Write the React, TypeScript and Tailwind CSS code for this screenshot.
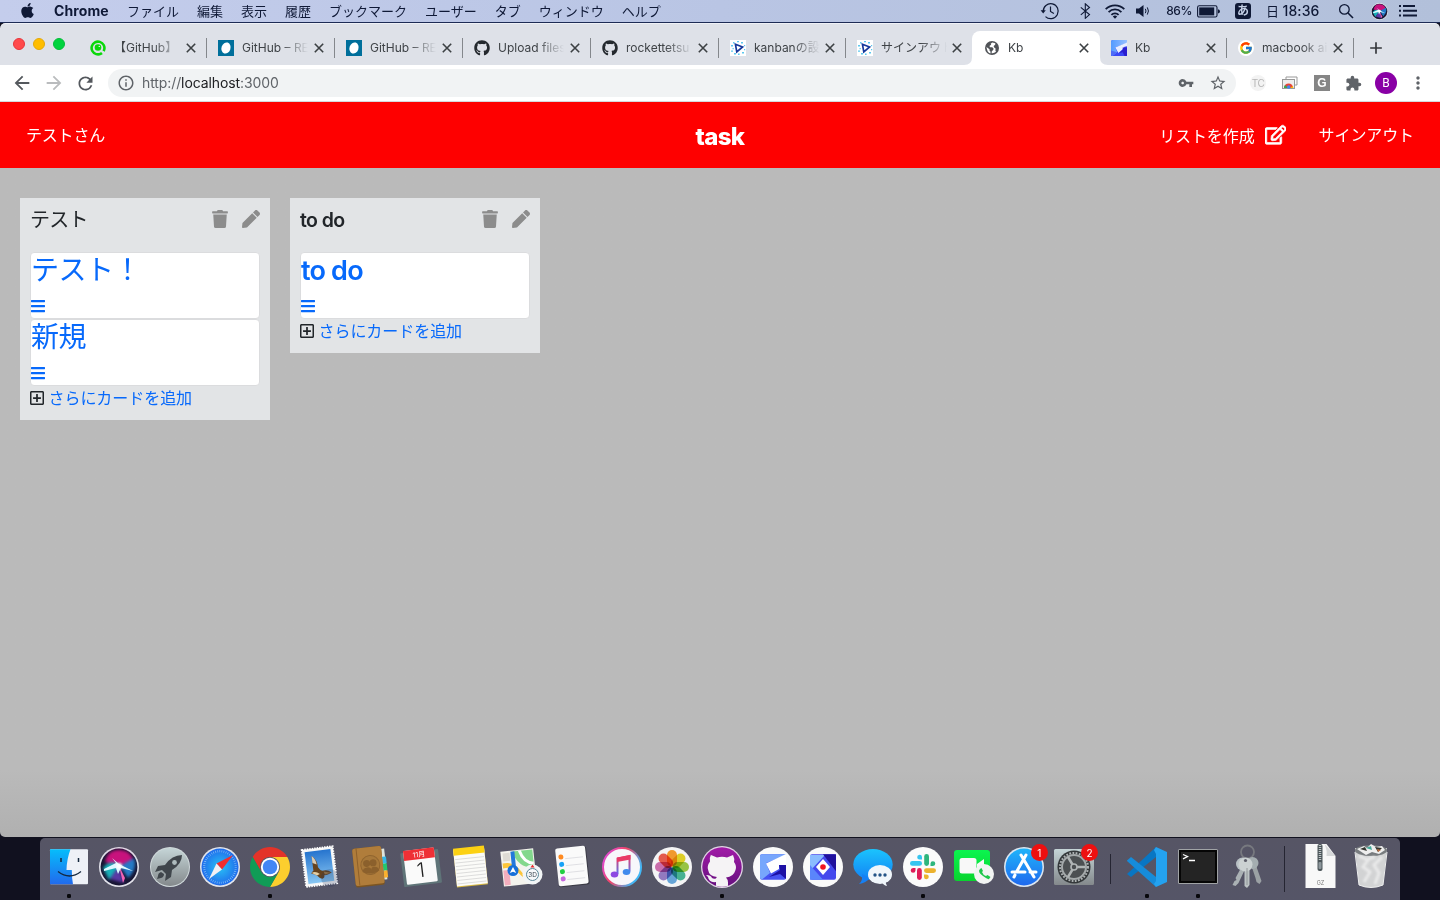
import React from "react";
import { FaApple, FaBars, FaGithub, FaPen, FaRegEdit, FaRegPlusSquare, FaTrash } from "react-icons/fa";
import { FcGoogle } from "react-icons/fc";
import {
  MdAdd,
  MdArrowBack,
  MdArrowForward,
  MdExtension,
  MdMoreVert,
  MdOutlineInfo,
  MdRefresh,
  MdStarBorder,
  MdVpnKey,
} from "react-icons/md";

/* ---------- Menu bar ---------- */

const menus = ["ファイル", "編集", "表示", "履歴", "ブックマーク", "ユーザー", "タブ", "ウィンドウ", "ヘルプ"];

function MenuBar() {
  return (
    <div className="flex h-[23px] shrink-0 items-center border-b border-[#1d2b55] bg-linear-to-r from-[#c4cdec] via-[#b9c5e4] to-[#b2c0da] text-[13px] leading-[22px] text-[#0f1936]">
      <div className="flex w-[54px] justify-center">
        <FaApple size={17} className="-mt-0.5" />
      </div>
      <div className="w-[73px] text-[14px] font-bold tracking-[0.1px]">Chrome</div>
      <div className="flex gap-[18px]">
        {menus.map((m) => (
          <span key={m} className="whitespace-nowrap">{m}</span>
        ))}
      </div>
      <div className="ml-auto flex items-center">
        <div className="flex w-[36px] justify-center">
          <svg width="20" height="18" viewBox="0 0 20 18" fill="none" stroke="currentColor" strokeWidth="1.2">
            <path d="M3.2 9.5A7.5 7.5 0 1 1 5.5 14.6" />
            <path d="M10.5 4.5v5l3.4 2" />
            <path d="M.6 8.2h5.2L3.2 11.4z" fill="currentColor" stroke="none" />
          </svg>
        </div>
        <div className="flex w-[34px] justify-center">
          <svg width="11" height="16" viewBox="0 0 11 16" fill="none" stroke="currentColor" strokeWidth="1.1">
            <path d="m.8 4.3 8.7 7.3-4.2 3.7V.8l4.2 3.7-8.7 7.3" />
          </svg>
        </div>
        <div className="flex w-[26px] justify-center">
          <svg width="20" height="15" viewBox="0 0 20 15" fill="none" stroke="currentColor" strokeWidth="1.8">
            <path d="M.7 5.2a13.2 13.2 0 0 1 18.6 0M3.6 8.1a9.1 9.1 0 0 1 12.8 0M6.4 10.8a5.1 5.1 0 0 1 7.2 0" />
            <path d="M10 14.8 7.8 12.5a3.2 3.2 0 0 1 4.4 0z" fill="currentColor" stroke="none" />
          </svg>
        </div>
        <div className="flex w-[29px] justify-center">
          <svg width="15" height="14" viewBox="0 0 15 14" fill="currentColor">
            <path d="M1 4.5h3L8.5 1v12L4 9.5H1z" />
            <path d="M10.3 4.8q1.4 2.2 0 4.4M12.3 3.4q2.3 3.6 0 7.2" fill="none" stroke="currentColor" strokeWidth="1" />
          </svg>
        </div>
        <div className="w-[40px] pr-[5px] text-right text-[12px] font-medium tracking-[-0.4px]">86%</div>
        <div className="flex w-[38px] items-center">
          <svg width="24" height="13" viewBox="0 0 24 13">
            <rect x=".6" y=".8" width="19.4" height="11.2" rx="1.6" fill="none" stroke="currentColor" strokeWidth="1.1" />
            <rect x="2.2" y="2.4" width="15" height="8" fill="currentColor" />
            <path d="M21 4.2q2 .6 2 2.2t-2 2.2z" fill="currentColor" />
          </svg>
        </div>
        <div className="flex h-4 w-4 items-center justify-center rounded-[3px] bg-[#0f1936] text-[12px] font-bold leading-4 text-[#c3cfe6]">あ</div>
        <div className="flex w-[76px] gap-[3.5px] whitespace-nowrap pl-[15px] text-[14px]">
          <span className="text-[13px]">日</span>
          <span className="font-medium tracking-[0.1px]">18:36</span>
        </div>
        <div className="flex w-[38px] justify-center">
          <svg width="16" height="16" viewBox="0 0 16 16" fill="none" stroke="currentColor" strokeWidth="1.3">
            <circle cx="6.4" cy="6.4" r="4.8" />
            <path d="m10 10 5 5" strokeWidth="1.6" />
          </svg>
        </div>
        <div className="flex w-[28px] justify-center">
          <svg width="17" height="17" viewBox="5 9 40 40"><SiriArt /></svg>
        </div>
        <div className="flex w-[47px] pl-[6px]">
          <svg width="18" height="12" viewBox="0 0 18 12" fill="currentColor">
            <path d="M0 0h2v2H0zM4 0h12v2H4zM0 4.7h2v2H0zM4 4.7h14v2H4zM0 9.4h2v2H0zM4 9.4h14v2H4z" />
          </svg>
        </div>
      </div>
    </div>
  );
}

/* ---------- Browser tabs ---------- */

function QiitaIcon() {
  return (
    <svg width="16" height="16" viewBox="0 0 16 16">
      <circle cx="8" cy="8" r="6.4" fill="none" stroke="#0bd80b" strokeWidth="2.6" strokeDasharray="35.5 2.5 2.2 0" transform="rotate(62 8 8)" />
      <circle cx="8" cy="7.5" r="3.3" fill="#0bd80b" />
      <circle cx="9.3" cy="6.4" r=".7" fill="#e8ffe8" />
    </svg>
  );
}

function EggIcon() {
  return (
    <svg width="16" height="16" viewBox="0 0 16 16">
      <path fill="#006f9b" d="M0 0h16v16H0z" />
      <ellipse cx="8" cy="8" rx="4.5" ry="5.7" fill="#fff" transform="rotate(18 8 8)" />
    </svg>
  );
}

function PlayIcon() {
  return (
    <svg width="16" height="16" viewBox="0 0 16 16">
      <path fill="#fff" d="M0 0h16v16H0z" />
      <path d="M5.4 4.2 12.6 7 6.8 12z" fill="none" stroke="#173a9c" strokeWidth="1.7" />
      <path
        fill="#5cc8f0"
        d="M3 2h1.500v1.500H3zM7 1h2v1.200H7zM11 2h2v1.500h-2zM1 5h2v1.500H1zM2.500 8h1.300v1.300H2.500zM1 10.500h2v1.200H1zM4 13h2v1.500H4zM8 13.500h1.600v1.500H8zM12 12h2v1.400h-2zM14 5h1.200v1.200H14zM14 9h1.200v1.200H14z"
      />
    </svg>
  );
}

function GlobeIcon() {
  return (
    <svg width="14" height="14" viewBox="0 0 14 14">
      <circle cx="7" cy="7" r="7" fill="#505357" />
      <path d="M7.2 1.4 5.7 2.7l.5 1.1-1.6 1 .2 1.5h2.5l1.3 1.5-.6 1.8-1.1.2-.3 2.4A5.7 5.7 0 0 0 11 10.8l-.6-1.2.2-2.1-1.4-1-.6-1.5 1.6-1.2.1-1.5z" fill="#fff" />
      <path d="m1.500 6 3 2.200.1 1.600 1 .9-.2 1.800Q2 11.500 1.500 6" fill="#fff" />
    </svg>
  );
}

function GIcon() {
  return (
    <svg width="16" height="16" viewBox="0 0 26 26">
      <defs>
        <linearGradient id="gtop" x1="0" y1="0" x2="1" y2="0">
          <stop stopColor="#549bff" />
          <stop offset="1" stopColor="#95bfff" />
        </linearGradient>
      </defs>
      <rect width="26" height="26" rx="3" fill="#3a48f5" />
      <path d="M3 0h23v5L7 12l3 8-8 6q-2 0-2-3V3q0-3 3-3" fill="url(#gtop)" />
      <path d="M0 17 10 20 2 26H0z" fill="#4d6bf8" />
      <path d="M7 12 26 4v6l-4 1-3 4-7 6z" fill="#e8eeff" />
      <path d="M19 12h7v14h-4l-3-6-6 1 6-5z" fill="#2a1ed0" />
    </svg>
  );
}

function GoogleIcon() {
  return (
    <span className="flex h-4 w-4 items-center justify-center rounded-full bg-white"><FcGoogle size={14} /></span>
  );
}

function CloseIcon() {
  return (
    <svg width="14" height="14" viewBox="0 0 14 14" fill="none" stroke="#3c4043" strokeWidth="1.6">
      <path d="m2.800 2.800 8.400 8.400M11.200 2.800l-8.400 8.400" />
    </svg>
  );
}

type TabInfo = { icon: React.ReactNode; title: string; active?: boolean; line?: boolean; wide?: boolean };

const tabs: TabInfo[] = [
  { icon: <QiitaIcon />, title: "【GitHub】 ", line: true, wide: true },
  { icon: <EggIcon />, title: "GitHub – RE", line: true, wide: true },
  { icon: <EggIcon />, title: "GitHub – RE", line: true, wide: true },
  { icon: <FaGithub size={16} color="#24292e" />, title: "Upload files", line: true, wide: true },
  { icon: <FaGithub size={16} color="#24292e" />, title: "rockettetsu", line: true, wide: true },
  { icon: <PlayIcon />, title: "kanbanの設", line: true },
  { icon: <PlayIcon />, title: "サインアウト" },
  { icon: <GlobeIcon />, title: "Kb", active: true },
  { icon: <GIcon />, title: "Kb", line: true },
  { icon: <GoogleIcon />, title: "macbook ai", line: true },
];

function Tab({ icon, title, active, line, wide }: TabInfo) {
  const width = active ? "-ml-px w-[128px] rounded-t-[8px] bg-white pl-px" : wide ? "w-[128px]" : "w-[127px]";
  const fade = title === "Kb" ? "" : "[mask-image:linear-gradient(to_right,black_60%,transparent_100%)]";
  return (
    <div className={`relative flex h-[34px] shrink-0 items-center ${width}`}>
      {active && (
        <>
          <svg className="absolute bottom-0 -left-2" width="8" height="8"><path d="M8 0v8H0q8 0 8-8" fill="#fff" /></svg>
          <svg className="absolute bottom-0 -right-2" width="8" height="8"><path d="M0 0v8h8Q0 8 0 0" fill="#fff" /></svg>
        </>
      )}
      <div className="ml-[11px] flex h-4 w-4 items-center justify-center">{icon}</div>
      <div className={`ml-2 h-[18px] w-[66px] overflow-hidden whitespace-nowrap text-[12px] leading-[18px] text-[#3f4347] ${fade}`}>
        {title}
      </div>
      <div className={wide ? "ml-[4px] flex w-[14px] justify-center" : "ml-[3px] flex w-[14px] justify-center"}><CloseIcon /></div>
      <div className={line ? "ml-auto h-5 w-px bg-[#84878c]" : "ml-auto h-5 w-px"} />
    </div>
  );
}

function TabStrip() {
  return (
    <div className="flex h-[42px] items-end rounded-t-[5px] border-t border-[#eff1f6] bg-[#dee1e8]">
      <div className="flex h-[42px] w-[79px] shrink-0 items-center gap-2 pl-[13px]">
        <span className="h-3 w-3 rounded-full border border-[#e8353b] bg-[#ff4a4c]" />
        <span className="h-3 w-3 rounded-full border border-[#e4a90a] bg-[#ffbd00]" />
        <span className="h-3 w-3 rounded-full border border-[#04bd3a] bg-[#00d33e]" />
      </div>
      {tabs.map((t, i) => (
        <Tab key={i} {...t} />
      ))}
      <div className="flex h-[34px] w-[44px] items-center justify-center text-[#34373b]"><MdAdd size={20} /></div>
    </div>
  );
}

function Toolbar() {
  return (
    <div className="flex h-[37px] items-center border-b border-[#d6d8dc] bg-white text-[#5f6368]">
      <div className="flex w-[108px] shrink-0 items-center pl-[11px]">
        <MdArrowBack size={22} className="text-[#54585d]" />
        <MdArrowForward size={22} className="ml-[10px] text-[#babcbe]" />
        <MdRefresh size={21} className="ml-[10px] text-[#54585d]" />
      </div>
      <div className="flex h-7 w-[1128px] shrink-0 items-center rounded-full bg-[#f1f3f4] pl-[9px]">
        <MdOutlineInfo size={18} />
        <div className="ml-[7px] text-[14px] leading-5 tracking-[-0.1px]">
          http://<span className="text-[#202124]">localhost</span>:3000
        </div>
        <MdVpnKey size={16} className="ml-auto" />
        <MdStarBorder size={18} className="ml-[15px] mr-[9px]" />
      </div>
      <div className="flex flex-1 items-center pl-[14px]">
        <span className="flex h-4 w-4 items-center justify-center rounded-full bg-[#f3f3f3] text-[10px] tracking-[-0.5px] text-[#b5b5b5]">TC</span>
        <svg className="ml-4" width="16" height="16" viewBox="0 0 16 16">
          <path d="M4 5V2h11v8h-3" fill="#fff" stroke="#999" />
          <rect x=".5" y="4.5" width="12" height="9" fill="#eee" stroke="#999" />
          <path d="M2 13a4.600 4.600 0 0 1 9.200 0z" fill="#ea4335" />
          <path d="M2 13q0-2 1-3l3 3z" fill="#34a853" />
          <path d="m8 13 3-2 .2 2z" fill="#fbbc05" />
          <circle cx="6.700" cy="12" r="1.700" fill="#4285f4" />
        </svg>
        <span className="ml-4 flex h-4 w-4 items-center justify-center bg-[#858585] font-['Liberation_Sans'] text-[12px] font-bold leading-4 text-white">G</span>
        <MdExtension size={17} className="ml-[15px]" />
        <span className="ml-[13px] flex h-[22px] w-[22px] shrink-0 items-center justify-center rounded-full bg-[#8900a5] font-['Roboto'] text-[12px] text-white">B</span>
        <MdMoreVert size={20} className="ml-[11px] shrink-0" />
      </div>
    </div>
  );
}

/* ---------- Kanban page ---------- */

function PageHeader() {
  return (
    <header className="grid h-[66px] grid-cols-3 items-center bg-[#fe0000] pl-[26px] pr-[26px] text-[16px] leading-6 text-white">
      <div className="tracking-[-0.2px]">テストさん</div>
      <h1 className="pt-1 text-center text-[24px] font-extrabold leading-7 tracking-[-0.6px]">task</h1>
      <div className="flex items-center justify-end whitespace-nowrap">
        <span className="pt-0.5 tracking-[-0.1px]">リストを作成</span>
        <FaRegEdit size={21.5} stroke="currentColor" strokeWidth={18} className="ml-[10px] mr-[32.5px]" />
        <span className="tracking-[-0.1px]">サインアウト</span>
      </div>
    </header>
  );
}

function Card({ title }: { title: string }) {
  return (
    <div className="h-[67px] rounded-[4px] border border-[#dbdcde] bg-white text-[#0769fb]">
      <div className="h-[41px] leading-[34px]">
        <span className={title === "to do" ? "text-[27px] font-semibold leading-[36px] tracking-[-0.8px]" : "text-[28px] font-normal tracking-[-0.5px]"}>{title}</span>
      </div>
      <FaBars size={16} className="-ml-px mt-1" />
    </div>
  );
}

function List({ title, cards }: { title: string; cards: string[] }) {
  return (
    <section className="w-[250px] bg-[#e2e4e6] px-[10px] pb-[10px]">
      <div className="flex h-[54px] items-start justify-between pt-[11px]">
        <h2 className={title === "to do" ? "text-[19.5px] font-semibold leading-[22px] tracking-[-0.6px] text-[#212529]" : "text-[20px] leading-[22px] tracking-[-0.8px] text-[#212529]"}>{title}</h2>
        <div className="flex gap-[13px] pt-px text-[#8c8c8c]">
          <FaTrash size={18} />
          <FaPen size={18} />
        </div>
      </div>
      {cards.map((c) => (
        <Card key={c} title={c} />
      ))}
      <div className="flex h-6 items-center text-[16px] leading-6 text-[#212529]">
        <FaRegPlusSquare size={16} className="-ml-px" />
        <span className="ml-[3.5px] tracking-[-0.05px] text-[#0769fb]">さらにカードを追加</span>
      </div>
    </section>
  );
}

/* ---------- Dock art: each piece is drawn in a 50 x 62 cell ---------- */

function Finder() {
  return (
    <g>
      <rect x="6" y="11.3" width="38" height="35" rx="1" fill="#eef1f7" />
      <path d="M6 11.3h20.5q-3.8 10-4 20.7h5.3q0 8 1.2 14.3H6z" fill="url(#finder)" />
      <path d="M17 20v4M34.5 20v4" stroke="#14283e" strokeWidth="1.5" />
      <path d="M14 33.5q11.5 9 23 0" fill="none" stroke="#14283e" strokeWidth="1.3" />
    </g>
  );
}

function SiriArt() {
  return (
    <g>
      <circle cx="25" cy="29" r="20" fill="#e2e2ea" />
      <circle cx="25" cy="29" r="18.4" fill="#181634" />
      <g className="blur-[1.5px]">
        <path d="M11 24Q14 11 26 12t13 11l-13 5z" fill="#c8127d" />
        <path d="M9 30q7-9 17-3L15 42z" fill="#18b0b8" />
        <path d="m26 28 14-8q4 11-6 20z" fill="#2479c5" />
        <path d="m25 28 5 17-14-4z" fill="#5a39a5" />
      </g>
      <path d="m25 28 4 17 2-5z" fill="#f263b5" />
      <path d="m10 31 12-6-4-5 7 6 14 7-12-3-3 6-2-6-12 3z" fill="#dcfaff" className="blur-[0.5px]" />
      <circle cx="25" cy="28" r="3" fill="#fff" className="blur-[1px]" />
    </g>
  );
}

function Launchpad() {
  return (
    <g>
      <circle cx="25" cy="29" r="20" fill="#d0d9db" />
      <circle cx="25" cy="29" r="19" fill="url(#silver)" />
      <path d="M37 17q-10 0-17 10l-7 1-3 6 7-2 4 4-1 7 6-4 1-7q10-6 10-15" fill="#40464c" />
      <path d="M16 34q-3 1-3 4l-1 3 4-1q3-1 3-4z" fill="#40464c" />
      <circle cx="29.5" cy="24.5" r="2.4" fill="#aebbbd" />
    </g>
  );
}

function Safari() {
  return (
    <g>
      <circle cx="25" cy="29" r="20" fill="#e2e5ec" />
      <circle cx="25" cy="29" r="18.5" fill="url(#safari)" />
      <circle cx="25" cy="29" r="15.8" fill="none" stroke="#bce7ff" strokeWidth="2.2" strokeDasharray=".6 1.5" opacity=".7" />
      <path d="m38 17-16.5 8.500 5.500 6z" fill="#f22d2d" />
      <path d="m14 41 7.500-15.500 5.500 6z" fill="#eff0f4" />
    </g>
  );
}

function Chrome() {
  return (
    <g transform="translate(5 9) scale(.8333)">
      <path d="M3.22 12a24 24 0 0 1 41.56 0H24a12 12 0 0 0-10.39 18z" fill="#e33329" />
      <path d="M44.78 12A24 24 0 0 1 24 48l10.39-18A12 12 0 0 0 24 12z" fill="#fcce2e" />
      <path d="M24 48A24 24 0 0 1 3.22 12l10.39 18a12 12 0 0 0 20.78 0z" fill="#109c56" />
      <circle cx="24" cy="24" r="11" fill="#fff" />
      <circle cx="24" cy="24" r="8.7" fill="#4286f5" />
    </g>
  );
}

function Mail() {
  return (
    <g>
      <g transform="rotate(-7 25 29)">
        <rect x="9" y="10" width="31" height="37" fill="#f6f6f6" />
        <rect x="9" y="10" width="31" height="37" fill="none" stroke="#fff" strokeWidth="2" strokeDasharray="1.5 1" />
        <rect x="11.5" y="12.5" width="26" height="32" fill="url(#sky)" />
        <path d="M18 17q5 4 5 12 2 4 4 4 5-1 9 3-4 2-8 2 1 2-2 3-3-1-5-4-3-2-5-2-1-1 2-3 0-7 0-15" fill="#65431f" />
        <path d="M18 17q4 4 4 9l-4-2z" fill="#d9ccb5" />
        <path d="M16 34q4-2 8 2l-3 1z" fill="#e4cfa5" />
        <path d="m28 34 7 2-6 1z" fill="#a57f46" />
      </g>
      <circle cx="35" cy="40" r="9" fill="#29385b" opacity=".24" />
    </g>
  );
}

function Contacts() {
  return (
    <g transform="rotate(-6 25 29)">
      <path d="M36 12h4v31h-4z" fill="#dfe5df" />
      <path d="M37 20h4v7h-4z" fill="#35b7e8" />
      <path d="M37 27h4v7h-4z" fill="#25c86c" />
      <path d="M37 34h4v7h-4z" fill="#fbb02e" />
      <rect x="8" y="9" width="29" height="39" rx="2" fill="#7c5522" />
      <rect x="8" y="9" width="29" height="37.5" rx="2" fill="#b07d3b" />
      <path d="M12 9v37" stroke="#8d602b" />
      <circle cx="24.5" cy="27" r="9.5" fill="#a7783a" stroke="#91652f" />
      <g fill="#8b602c">
        <circle cx="21" cy="25" r="3.5" />
        <circle cx="27.5" cy="25" r="3.5" />
        <path d="M16 33q1-4 5-4t4 3q0-3 3-3 4 0 5 4-8 5-17 0" />
      </g>
    </g>
  );
}

function Calendar() {
  return (
    <g transform="rotate(-7 25 29)">
      <rect x="6" y="13" width="38" height="34" rx="1" fill="#5f7478" />
      <rect x="9" y="11" width="31" height="34" rx="1" fill="#fafafa" />
      <path d="M9 11h31v10H9z" fill="#ee3035" />
      <text x="24.5" y="18.8" textAnchor="middle" fontSize="7" fill="#fff">11月</text>
      <text x="24.5" y="39" textAnchor="middle" fontSize="20" fill="#222" fontWeight="300">1</text>
    </g>
  );
}

function Notes() {
  return (
    <g transform="rotate(-6 25 29)">
      <rect x="9" y="10" width="31" height="38" fill="#d9b93e" />
      <rect x="9" y="10" width="31" height="37" fill="#fbfbf8" />
      <path d="M9 9h31v7H9z" fill="#fcd113" />
      <path d="M10 20h29M10 23.500h29M10 27h29M10 30.500h29M10 34h29M10 37.500h29M10 41h29M10 44.500h29" stroke="#d1d1d1" strokeWidth=".7" />
    </g>
  );
}

function Maps() {
  return (
    <g>
      <g transform="rotate(-6 22 29)">
        <rect x="6" y="12" width="33" height="35" fill="#f4f3ed" />
        <path d="M8 14h7v8H8z" fill="#dedbd4" />
        <path d="M18 13h20v19q-17-3-20-19" fill="#83d88d" />
        <path d="M25 13q3 12 13 14" fill="none" stroke="#fff" strokeWidth="3" />
        <path d="M7 24q11-2 18 10t13 5v5q-11-1-16-9T7 29z" fill="#fcc63b" />
        <path d="M7 31h6v15H7z" fill="#f4aebe" />
        <path d="M18 13v18" stroke="#2378dc" strokeWidth="4" />
      </g>
      <circle cx="17" cy="32.5" r="5.5" fill="#1770d9" />
      <path d="m17 29 3.200 6-3.200-1.300-3.200 1.300z" fill="#fff" />
      <circle cx="36.500" cy="36.500" r="10" fill="#f2f5f6" />
      <circle cx="36.500" cy="36.500" r="6" fill="#f7f9fa" stroke="#588799" />
      <path d="m36.500 26.500 2 3h-4z" fill="#e82b2b" />
      <text x="36.500" y="39" fontSize="6.5" textAnchor="middle" fill="#3a4650">3D</text>
    </g>
  );
}

function Reminders() {
  return (
    <g transform="rotate(-6 25 29)">
      <rect x="10" y="10" width="31" height="38" rx="2" fill="#3b3b46" />
      <rect x="10" y="9" width="30" height="38" rx="2" fill="#fafafa" />
      <path d="M19 20h18M19 27h18M19 34h18M19 41h18" stroke="#d6d6dc" strokeWidth=".7" />
      <circle cx="15" cy="18" r="2.5" fill="#ff8a21" />
      <circle cx="15" cy="25.3" r="2.5" fill="#18a2f7" />
      <circle cx="15" cy="32.6" r="2.5" fill="#22cf43" />
      <circle cx="15" cy="39.9" r="2.5" fill="#c667de" />
    </g>
  );
}

function Music() {
  return (
    <g>
      <circle cx="25" cy="29" r="19" fill="#f7f7fb" stroke="url(#music)" strokeWidth="2" />
      <path d="M20.5 36V20.5l12-2.500v15.500" fill="none" stroke="url(#note)" strokeWidth="2" />
      <path d="M20 19.500 33.500 17v4.500L20 24z" fill="#e93a68" />
      <ellipse cx="17.500" cy="36.500" rx="3.800" ry="3" fill="#8d49e2" />
      <ellipse cx="29.500" cy="34" rx="3.800" ry="3" fill="#408bed" />
    </g>
  );
}

const petals = ["#fb9b22", "#e6d61c", "#99ca3c", "#3fb592", "#62a8df", "#9478c4", "#d06aae", "#ed5546"];

function Photos() {
  return (
    <g>
      <circle cx="25" cy="29" r="20" fill="#f4f4f5" />
      {petals.map((c, i) => (
        <rect key={c} x="20" y="12" width="10" height="16.5" rx="5" fill={c} opacity=".95" transform={`rotate(${i * 45} 25 29)`} className="mix-blend-multiply" />
      ))}
    </g>
  );
}

function GithubDesktop() {
  return (
    <g>
      <circle cx="25" cy="29" r="21" fill="#e2d5e6" />
      <circle cx="25" cy="29" r="19.7" fill="url(#purple)" />
      <path d="m14 17 6 2.500q5-1.500 10 0l6-2.500q2 4 1 7 3 4 1.500 8-2 7-9.500 7.500 2 2 2 5v3.300q-6 2-12 0V44q-7 1-8-5l-2-2q5 0 6 3 1.500 1 4 .5 0-1 1-1.500-8-.5-9-7.500-1-4 2-8-1-3 1-7" fill="#f5f3f5" />
    </g>
  );
}

function BlueG() {
  return (
    <g>
      <circle cx="25" cy="29" r="20" fill="#fafafa" />
      <rect x="12" y="16.3" width="26" height="25.5" rx="2" fill="#4652f2" />
      <path d="M14 16.300h24v1L18 25l4 10-8 6.500q-2 0-2-2V18.300q0-2 2-2" fill="#77a6fc" />
      <path d="M18 25.500 38 16v11h-7v4l-8 4.500z" fill="#fff" />
      <path d="M31 27h7v14l-6-5-11 3 11-7z" fill="#1d10a4" />
    </g>
  );
}

function BlueDiamond() {
  return (
    <g>
      <circle cx="25" cy="29" r="20" fill="#fafafa" />
      <rect x="12" y="16.3" width="26" height="25.5" rx="2" fill="#4549ed" />
      <path d="M12 17h15L12 33z" fill="#8abcff" />
      <path d="m12 27 13 14.800H12z" fill="#5a85fb" />
      <path d="M25 16.300h13v17z" fill="#20109d" />
      <path d="m25 21 7 8-7 8-7-8z" fill="#fff" />
      <circle cx="25" cy="29" r="2.8" fill="#f01522" />
    </g>
  );
}

function Messages() {
  return (
    <g>
      <ellipse cx="25" cy="26.5" rx="19.7" ry="15.5" fill="url(#msg)" />
      <path d="M14 36q1 7-3 10 7-1 11-6z" fill="#1680f4" />
      <ellipse cx="32" cy="36.5" rx="12" ry="9.5" fill="#f0f6fb" />
      <path d="M34 44q1 3 5 4-2-3-1-6z" fill="#f0f6fb" />
      <g fill="#245487"><circle cx="27" cy="37" r="1.7" /><circle cx="32" cy="37" r="1.7" /><circle cx="37" cy="37" r="1.7" /></g>
    </g>
  );
}

const slackColors = ["#36c5f0", "#2eb67d", "#ecb22e", "#e01e5a"];

function Slack() {
  return (
    <g>
      <circle cx="25" cy="29" r="20" fill="#fbfbfb" />
      {slackColors.map((c, i) => (
        <g key={c} fill={c} transform={`rotate(${i * 90} 25 29)`}>
          <rect x="12" y="23" width="12" height="4.8" rx="2.4" />
          <path d="M24 21.500V19a2.400 2.400 0 1 0-2.400 2.500z" />
        </g>
      ))}
    </g>
  );
}

function FaceTime() {
  return (
    <g>
      <rect x="5" y="12" width="36" height="31" rx="3" fill="url(#green)" />
      <rect x="10.5" y="20" width="17" height="15.5" rx="2.5" fill="#f8f8f8" />
      <path d="m28 26 7-5v11h-7z" fill="#f8f8f8" />
      <circle cx="35" cy="36" r="10" fill="#f2f4f3" />
      <path d="M31 31q-3 3 3 7t6 3l1.500-2-3-2-1.500 1q-3-1-4-4l1-1-1.500-3z" fill="#1ec84b" />
    </g>
  );
}

function AppStore() {
  return (
    <g>
      <circle cx="25" cy="29" r="20" fill="#dde7f1" />
      <circle cx="25" cy="29" r="18.5" fill="url(#store)" />
      <g stroke="#fff" strokeWidth="3" strokeLinecap="round"><path d="m27 17-9 16M22 17l13 22M13 34h13M31 34h6M16 37l-1 2" /></g>
    </g>
  );
}

function Settings() {
  return (
    <g>
      <rect x="5" y="11" width="40" height="36" rx="1.5" fill="url(#silver)" />
      <circle cx="25" cy="29" r="16.5" fill="#34383a" />
      <circle cx="25" cy="29" r="14" fill="none" stroke="#aeb3b4" strokeWidth="2" strokeDasharray="1.8 1.4" />
      <circle cx="25" cy="29" r="12" fill="#4c5052" stroke="#a4a9aa" strokeWidth="2" />
      <path d="M25 29h11M25 29l-6-10M25 29l-6 10" stroke="#b0b5b5" strokeWidth="2.5" />
      <circle cx="25" cy="29" r="3" fill="#4a4e50" stroke="#b0b5b5" strokeWidth="1.6" />
    </g>
  );
}

function VsCode() {
  return (
    <g>
      <path d="m5 36 29-27v10L9 39z" fill="#0876c3" />
      <path d="M5 22.500 9 19l25 20v10L5 23z" fill="#168cda" />
      <path d="m34 9 11 5v30l-11 5-2-3 2-3V16l-2-4z" fill="#24a2ef" />
    </g>
  );
}

function Terminal() {
  return (
    <g>
      <rect x="5" y="11" width="40" height="35" rx="1.5" fill="#a0a3a5" />
      <rect x="6" y="12" width="38" height="33" fill="#050505" />
      <rect x="8" y="14" width="34" height="29" fill="#242424" />
      <path d="m10 16.500 4.500 2-4.500 2.300M16 22.500h6" fill="none" stroke="#fff" strokeWidth="1.3" />
    </g>
  );
}

function Keys() {
  return (
    <g transform="translate(-2.5 0)">
      <circle cx="27" cy="14" r="6.5" fill="none" stroke="#77797f" strokeWidth="1.8" />
      <path d="m21 29 5-1-8 17-3 3-3-1 2-4 2-1-1-2z" fill="#aab1b4" />
      <path d="m31 28 4-2 6 17-2 3-3-2-1-4z" fill="#9ba1a4" />
      <path d="M24 28h5v19l-2.500 3-2.500-2z" fill="#bbc2c3" />
      <circle cx="22" cy="26" r="6.5" fill="#b9c1c5" />
      <circle cx="32" cy="25" r="6" fill="#a4adb0" />
      <circle cx="25" cy="26.5" r="7" fill="#cbd1d2" />
      <circle cx="25" cy="22.5" r="1.6" fill="#5c5e69" />
      <path d="M26.500 30v17" stroke="#858c8e" strokeWidth=".8" />
    </g>
  );
}

function GzFile() {
  return (
    <g transform="translate(-.5 0)">
      <path d="M10 6h21l9 12v32H10z" fill="#f8f8f8" />
      <path d="M29 6q3 7 2 12h9z" fill="#d7d9da" />
      <rect x="22" y="6" width="5" height="27" rx="2" fill="#4c565a" />
      <path d="M24.500 7v16" stroke="#bec5c7" strokeWidth="2.5" strokeDasharray="1 1" />
      <rect x="23" y="24" width="3" height="7" rx="1" fill="#8c969b" />
      <text x="25" y="47" textAnchor="middle" fontSize="5.5" fill="#777">GZ</text>
    </g>
  );
}

function Trash() {
  return (
    <g>
      <path d="M9 10h32l-4 37q-12 5-24 0z" fill="#d2d3d4" />
      <ellipse cx="25" cy="12.5" rx="16" ry="5.5" fill="#777b7e" />
      <path d="m11 11 7-3 3 2 4-4 5 3 6-1 3 4-6 4-7-2-6 3z" fill="#eee" />
      <path d="m14 11 5-2 2 4zM29 9l7 1-4 4z" fill="#34352f" />
      <path d="m20 10 5-2 1 4z" fill="#42a898" />
      <path d="m31 11 4 1-3 2z" fill="#bd7042" />
      <path d="m13 18 9 4-5 7 7 5-6 10M36 19l-8 8 5 8-4 11M22 21l7-2" fill="none" stroke="#f4f4f4" strokeWidth="3" opacity=".7" className="blur-[1px]" />
      <path d="m9 14 4 33q12 5 24 0l4-33" fill="none" stroke="#eeefef" />
    </g>
  );
}

type DockItem = { art: React.ReactNode; dot?: boolean; badge?: string };

const apps: DockItem[] = [
  { art: <Finder />, dot: true },
  { art: <SiriArt /> },
  { art: <Launchpad /> },
  { art: <Safari /> },
  { art: <Chrome />, dot: true },
  { art: <Mail /> },
  { art: <Contacts /> },
  { art: <Calendar /> },
  { art: <Notes /> },
  { art: <Maps /> },
  { art: <Reminders /> },
  { art: <Music /> },
  { art: <Photos /> },
  { art: <GithubDesktop />, dot: true },
  { art: <BlueG /> },
  { art: <BlueDiamond /> },
  { art: <Messages /> },
  { art: <Slack />, dot: true },
  { art: <FaceTime /> },
  { art: <AppStore />, badge: "1" },
  { art: <Settings />, badge: "2" },
];

const tools: DockItem[] = [{ art: <VsCode />, dot: true }, { art: <Terminal />, dot: true }, { art: <Keys /> }];
const files: DockItem[] = [{ art: <GzFile /> }, { art: <Trash /> }];

function DockIcon({ art, dot, badge }: DockItem) {
  return (
    <div className="relative h-[62px] w-[50.25px] shrink-0">
      <svg width="50" height="62" viewBox="0 0 50 62">
        {art}
        {dot && <rect x="23" y="56" width="4" height="4" rx="1.3" fill="#08080c" />}
      </svg>
      {badge && (
        <span className="absolute left-[32px] top-[6px] flex h-[17px] w-[17px] items-center justify-center rounded-full bg-[#ed1010] text-[10px] leading-none text-white">{badge}</span>
      )}
    </div>
  );
}

function Dock() {
  return (
    <div className="mx-10 mt-px flex h-[62px] shrink-0 rounded-t-[5px] bg-linear-to-b from-[#565565] to-[#555567] pl-[4.1px]">
      <svg width="0" height="0">
        <defs>
          <linearGradient id="finder" x2="0" y2="1"><stop stopColor="#06bdfb" /><stop offset="1" stopColor="#216aed" /></linearGradient>
          <linearGradient id="silver" x2="0" y2="1"><stop stopColor="#c5d5d7" /><stop offset="1" stopColor="#84898c" /></linearGradient>
          <radialGradient id="safari"><stop stopColor="#28c3f5" /><stop offset="1" stopColor="#206cec" /></radialGradient>
          <linearGradient id="store" x2="0" y2="1"><stop stopColor="#1fb4fa" /><stop offset="1" stopColor="#1f69ee" /></linearGradient>
          <linearGradient id="sky" x2="0" y2="1"><stop stopColor="#2674ce" /><stop offset="1" stopColor="#89c7f3" /></linearGradient>
          <linearGradient id="music" x2="1" y2=".5"><stop stopColor="#d84cf2" /><stop offset=".5" stopColor="#f34467" /><stop offset="1" stopColor="#42b8f7" /></linearGradient>
          <linearGradient id="note" x2="0" y2="1"><stop stopColor="#ee3a65" /><stop offset="1" stopColor="#5376ee" /></linearGradient>
          <linearGradient id="purple" x2="0" y2="1"><stop stopColor="#a11ba7" /><stop offset="1" stopColor="#66107f" /></linearGradient>
          <linearGradient id="msg" x2="0" y2="1"><stop stopColor="#1bc4fd" /><stop offset="1" stopColor="#1382f4" /></linearGradient>
          <linearGradient id="green" x2="0" y2="1"><stop stopColor="#0bf54f" /><stop offset="1" stopColor="#08d42e" /></linearGradient>
        </defs>
      </svg>
      {apps.map((a, i) => <DockIcon key={i} {...a} />)}
      <div className="flex w-[23px] shrink-0 justify-center pt-4"><span className="h-[30px] w-px bg-[#252532]" /></div>
      {tools.map((a, i) => <DockIcon key={i} {...a} />)}
      <div className="flex w-[22.5px] shrink-0 justify-center pt-2"><span className="h-[46px] w-px bg-[#252532]" /></div>
      {files.map((a, i) => <DockIcon key={i} {...a} />)}
    </div>
  );
}

export default function App() {
  return (
    <div className="flex h-[900px] w-[1440px] flex-col overflow-hidden bg-[#11111f] [font-family:Inter,'Noto_Sans_CJK_JP',sans-serif]">
      <MenuBar />
      <div className="flex h-[814px] shrink-0 flex-col overflow-hidden rounded-[5px]">
        <TabStrip />
        <Toolbar />
        <PageHeader />
        <main className="flex flex-1 items-start gap-5 bg-linear-to-b from-[#bababa] from-90% to-[#b0b0b0] px-5 pt-[30px]">
          <List title="テスト" cards={["テスト！", "新規"]} />
          <List title="to do" cards={["to do"]} />
        </main>
      </div>
      <Dock />
    </div>
  );
}
